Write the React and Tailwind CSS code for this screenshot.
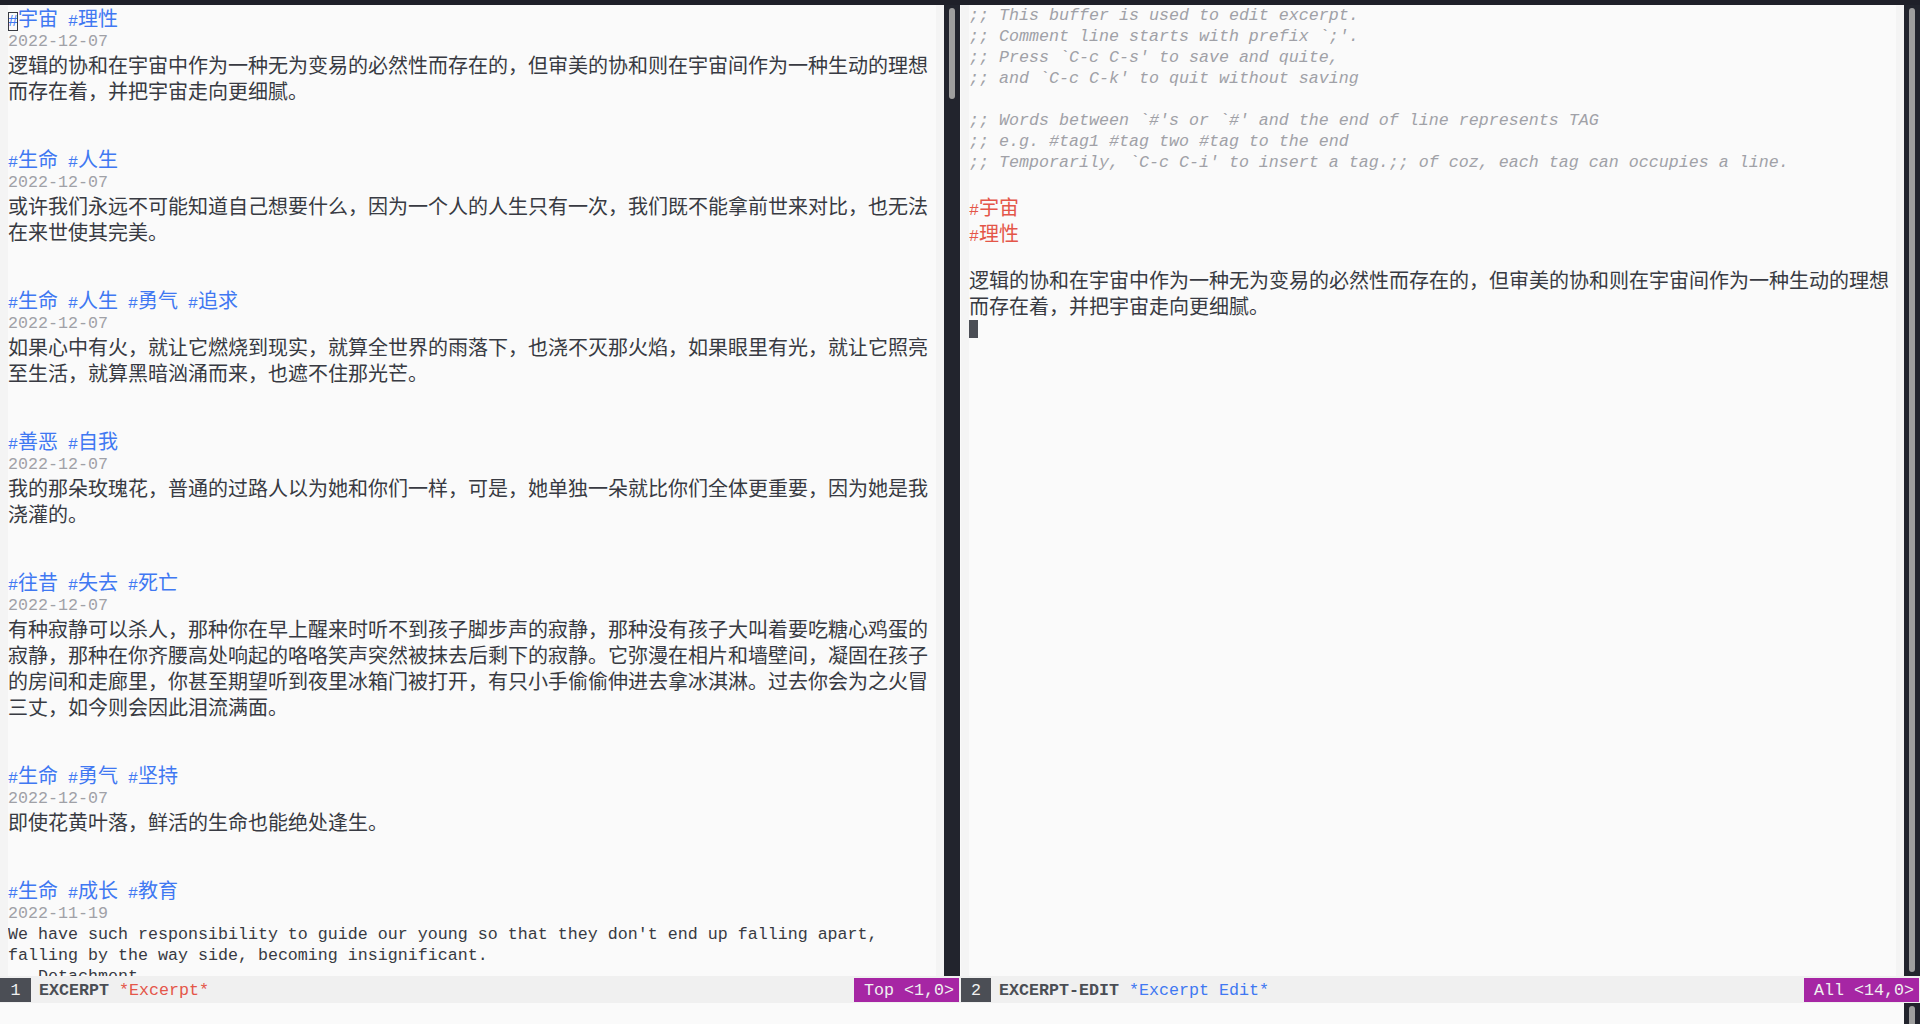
import React from 'react';

const entries = [
    {
        tags: ['宇宙', '理性'],
        date: '2022-12-07',
        lines: ['逻辑的协和在宇宙中作为一种无为变易的必然性而存在的，但审美的协和则在宇宙间作为一种生动的理想', '而存在着，并把宇宙走向更细腻。'],
    },
    {
        tags: ['生命', '人生'],
        date: '2022-12-07',
        lines: ['或许我们永远不可能知道自己想要什么，因为一个人的人生只有一次，我们既不能拿前世来对比，也无法', '在来世使其完美。'],
    },
    {
        tags: ['生命', '人生', '勇气', '追求'],
        date: '2022-12-07',
        lines: ['如果心中有火，就让它燃烧到现实，就算全世界的雨落下，也浇不灭那火焰，如果眼里有光，就让它照亮', '至生活，就算黑暗汹涌而来，也遮不住那光芒。'],
    },
    {
        tags: ['善恶', '自我'],
        date: '2022-12-07',
        lines: ['我的那朵玫瑰花，普通的过路人以为她和你们一样，可是，她单独一朵就比你们全体更重要，因为她是我', '浇灌的。'],
    },
    {
        tags: ['往昔', '失去', '死亡'],
        date: '2022-12-07',
        lines: [
            '有种寂静可以杀人，那种你在早上醒来时听不到孩子脚步声的寂静，那种没有孩子大叫着要吃糖心鸡蛋的',
            '寂静，那种在你齐腰高处响起的咯咯笑声突然被抹去后剩下的寂静。它弥漫在相片和墙壁间，凝固在孩子',
            '的房间和走廊里，你甚至期望听到夜里冰箱门被打开，有只小手偷偷伸进去拿冰淇淋。过去你会为之火冒',
            '三丈，如今则会因此泪流满面。',
        ],
    },
    {
        tags: ['生命', '勇气', '坚持'],
        date: '2022-12-07',
        lines: ['即使花黄叶落，鲜活的生命也能绝处逢生。'],
    },
    {
        tags: ['生命', '成长', '教育'],
        date: '2022-11-19',
        latin: true,
        lines: [
            "We have such responsibility to guide our young so that they don't end up falling apart,",
            'falling by the way side, becoming insignificant.',
            '   Detachment',
        ],
    },
];

const comments1 = [
    ';; This buffer is used to edit excerpt.',
    ";; Comment line starts with prefix `;'.",
    ";; Press `C-c C-s' to save and quite,",
    ";; and `C-c C-k' to quit without saving",
];

const comments2 = [
    ";; Words between `#'s or `#' and the end of line represents TAG",
    ';; e.g. #tag1 #tag two #tag to the end',
    ";; Temporarily, `C-c C-i' to insert a tag.;; of coz, each tag can occupies a line.",
];

// ascii in a 10px-wide mono, CJK at double width
const Mixed = ({ text }) =>
    text
        .split(/([\x00-\x7f]+)/)
        .filter(Boolean)
        .map((s, i) =>
            /^[\x00-\x7f]+$/.test(s) ? (
                <span key={i} className="font-['Liberation_Mono',monospace] text-[16.67px]">{s}</span>
            ) : (
                <span key={i} className="font-['Noto_Sans_CJK_SC',sans-serif] text-[20px]">{s}</span>
            )
        );

const CjkLine = ({ text, className = 'text-[#383a42]' }) => (
    <div className={`h-[26px] leading-[26px] whitespace-pre ${className}`}>
        <Mixed text={text} />
    </div>
);

const LatinLine = ({ text, className = 'text-[#383a42]' }) => (
    <div className={`h-[21px] leading-[21px] whitespace-pre font-['Liberation_Mono',monospace] text-[16.67px] ${className}`}>
        {text}
    </div>
);

const Blank = () => <div className="h-[21px]" />;

const Entry = ({ entry, first }) => (
    <div>
        <div className="h-[26px] leading-[26px] whitespace-pre text-[#4078f2]">
            {entry.tags.map((t, i) => (
                <React.Fragment key={t}>
                    {i > 0 && <span className="font-['Liberation_Mono',monospace] text-[16.67px]"> </span>}
                    {first && i === 0 ? (
                        // hollow cursor of the unselected window
                        <span className="outline outline-[#383a42] -outline-offset-1 font-['Liberation_Mono',monospace] text-[16.67px]">#</span>
                    ) : (
                        <span className="font-['Liberation_Mono',monospace] text-[16.67px]">#</span>
                    )}
                    <span className="font-['Noto_Sans_CJK_SC',sans-serif] text-[20px]">{t}</span>
                </React.Fragment>
            ))}
        </div>
        <LatinLine text={entry.date} className="text-[#a0a1a7]" />
        {entry.lines.map((l, i) => (entry.latin ? <LatinLine key={i} text={l} /> : <CjkLine key={i} text={l} />))}
        <Blank />
        <Blank />
    </div>
);

const Scrollbar = ({ thumb }) => (
    <div className="w-[16px] bg-[#22242d] pt-[3px] px-[5px]">
        <div className={`w-[6px] rounded-full bg-[#9e9e9e] ${thumb}`} />
    </div>
);

const Window = ({ children, className }) => (
    <div className={`flex ${className}`}>
        <div className="w-[8px] bg-[#f4f4f4]" />
        <div className="flex-1 bg-[#fafafa] overflow-hidden">{children}</div>
        <div className="w-[8px] bg-[#f4f4f4]" />
    </div>
);

const mono = "font-['Liberation_Mono',monospace] text-[16.67px]";

export default function App() {
    return (
        <div className="w-[1920px] h-[1024px] flex flex-col bg-[#fafafa] overflow-hidden">
            <div className="h-[5px] bg-[#1f2029]" />

            <div className="flex h-[971px]">
                <Window className="w-[944px]">
                    {entries.map((e, i) => (
                        <Entry key={i} entry={e} first={i === 0} />
                    ))}
                </Window>
                <Scrollbar thumb="h-[91px]" />
                <div className="w-[1px] bg-[#fafafa]" />
                <Window className="flex-1">
                    {comments1.map((c) => (
                        <LatinLine key={c} text={c} className="italic text-[#a0a1a7]" />
                    ))}
                    <Blank />
                    {comments2.map((c) => (
                        <LatinLine key={c} text={c} className="italic text-[#a0a1a7]" />
                    ))}
                    <Blank />
                    <CjkLine text="#宇宙" className="text-[#e45649]" />
                    <CjkLine text="#理性" className="text-[#e45649]" />
                    <Blank />
                    <CjkLine text="逻辑的协和在宇宙中作为一种无为变易的必然性而存在的，但审美的协和则在宇宙间作为一种生动的理想" />
                    <CjkLine text="而存在着，并把宇宙走向更细腻。" />
                    <div className="h-[21px] pt-[1px]">
                        <div className="w-[9px] h-[18px] bg-[#4b4e55]" />
                    </div>
                </Window>
                <Scrollbar thumb="h-[964px]" />
            </div>

            {/* mode lines */}
            <div className="flex h-[27px] bg-[#f0f0f0] pt-[2px] pb-[1px]">
                <div className="w-[960px] flex items-stretch">
                    <div className={`w-[31px] bg-[#4b4e55] text-[#f0f0f0] flex items-center justify-center ${mono}`}>1</div>
                    <div className={`ml-[8px] flex items-center whitespace-pre ${mono}`}>
                        <span className="font-bold text-[#4b4e55]">EXCERPT</span>
                        <span className="ml-[10px] text-[#e45649]">*Excerpt*</span>
                    </div>
                    <div className={`ml-auto mr-[1px] bg-[#a626a4] text-[#f0f0f0] pl-[10px] pr-[5px] flex items-center whitespace-pre ${mono}`}>
                        Top &lt;1,0&gt;
                    </div>
                </div>
                <div className="flex-1 flex items-stretch">
                    <div className={`ml-[1px] w-[30px] bg-[#4b4e55] text-[#f0f0f0] flex items-center justify-center ${mono}`}>2</div>
                    <div className={`ml-[8px] flex items-center whitespace-pre ${mono}`}>
                        <span className="font-bold text-[#4b4e55]">EXCERPT-EDIT</span>
                        <span className="ml-[10px] text-[#4078f2]">*Excerpt Edit*</span>
                    </div>
                    <div className={`ml-auto mr-[1px] bg-[#a626a4] text-[#f0f0f0] pl-[10px] pr-[5px] flex items-center whitespace-pre ${mono}`}>
                        All &lt;14,0&gt;
                    </div>
                </div>
            </div>

            {/* minibuffer */}
            <div className="flex h-[21px]">
                <div className="flex-1 bg-[#fafafa]" />
                <Scrollbar thumb="h-[20px]" />
            </div>
        </div>
    );
}
